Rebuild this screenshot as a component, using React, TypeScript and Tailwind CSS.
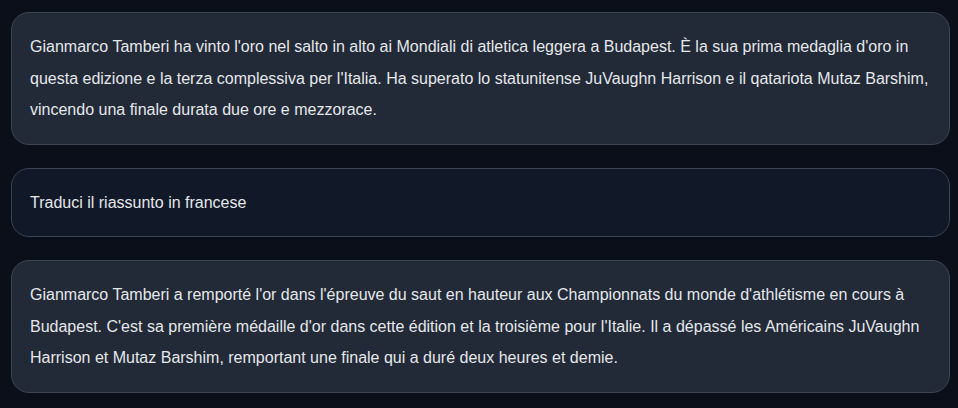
export default function App() {
  const cards = [
    {
      text: "Gianmarco Tamberi ha vinto l'oro nel salto in alto ai Mondiali di atletica leggera a Budapest. È la sua prima medaglia d'oro in questa edizione e la terza complessiva per l'Italia. Ha superato lo statunitense JuVaughn Harrison e il qatariota Mutaz Barshim, vincendo una finale durata due ore e mezzorace.",
      user: false,
    },
    { text: "Traduci il riassunto in francese", user: true },
    {
      text: "Gianmarco Tamberi a remporté l'or dans l'épreuve du saut en hauteur aux Championnats du monde d'athlétisme en cours à Budapest. C'est sa première médaille d'or dans cette édition et la troisième pour l'Italie. Il a dépassé les Américains JuVaughn Harrison et Mutaz Barshim, remportant une finale qui a duré deux heures et demie.",
      user: false,
    },
  ];
  return (
    <div
      className="w-[958px] h-[408px] bg-[#0b0f19] pt-3 pl-[11px] pr-[8px] flex flex-col gap-[23px] overflow-hidden"
      style={{ fontFamily: '"Liberation Sans", Arial, sans-serif' }}
    >
      {cards.map((c, i) => (
        <div
          key={i}
          className={
            c.user
              ? "rounded-[18px] border border-[#3d4555] bg-[#111827] px-[18px] py-[18px] text-[16px] leading-[31.5px] text-[#e5e7eb]"
              : "rounded-[18px] border border-[#3d4555] bg-[#222a37] px-[18px] py-[18px] text-[16px] leading-[31.5px] text-[#e5e7eb]"
          }
        >
          {c.text}
        </div>
      ))}
    </div>
  );
}
